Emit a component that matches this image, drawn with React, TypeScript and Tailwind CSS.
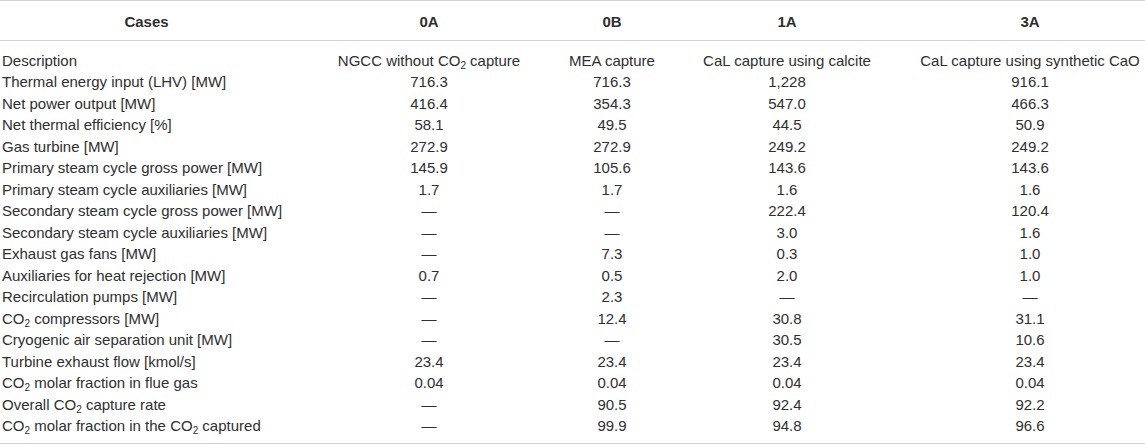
const CO2 = () => (
    <>
        CO<sub className="text-[10px] align-baseline relative top-[3px]">2</sub>
    </>
);

type Row = [React.ReactNode, string, string, string, string];

const rows: Row[] = [
    ["Thermal energy input (LHV) [MW]", "716.3", "716.3", "1,228", "916.1"],
    ["Net power output [MW]", "416.4", "354.3", "547.0", "466.3"],
    ["Net thermal efficiency [%]", "58.1", "49.5", "44.5", "50.9"],
    ["Gas turbine [MW]", "272.9", "272.9", "249.2", "249.2"],
    ["Primary steam cycle gross power [MW]", "145.9", "105.6", "143.6", "143.6"],
    ["Primary steam cycle auxiliaries [MW]", "1.7", "1.7", "1.6", "1.6"],
    ["Secondary steam cycle gross power [MW]", "—", "—", "222.4", "120.4"],
    ["Secondary steam cycle auxiliaries [MW]", "—", "—", "3.0", "1.6"],
    ["Exhaust gas fans [MW]", "—", "7.3", "0.3", "1.0"],
    ["Auxiliaries for heat rejection [MW]", "0.7", "0.5", "2.0", "1.0"],
    ["Recirculation pumps [MW]", "—", "2.3", "—", "—"],
    [<><CO2 /> compressors [MW]</>, "—", "12.4", "30.8", "31.1"],
    ["Cryogenic air separation unit [MW]", "—", "—", "30.5", "10.6"],
    ["Turbine exhaust flow [kmol/s]", "23.4", "23.4", "23.4", "23.4"],
    [<><CO2 /> molar fraction in flue gas</>, "0.04", "0.04", "0.04", "0.04"],
    [<>Overall <CO2 /> capture rate</>, "—", "90.5", "92.4", "92.2"],
    [<><CO2 /> molar fraction in the <CO2 /> captured</>, "—", "99.9", "94.8", "96.6"],
];

export default function App() {
    return (
        <div className="w-[1145px] h-[444px] bg-white text-[#2f2f2f]" style={{ fontFamily: "'Liberation Sans', Arial, sans-serif" }}>
            <div className="border-t border-b border-[#d2d2d2]">
                <table className="w-full table-fixed border-collapse text-[15px] leading-[21.5px]">
                    <colgroup>
                        <col className="w-[293px]" />
                        <col className="w-[272px]" />
                        <col className="w-[94px]" />
                        <col className="w-[256px]" />
                        <col className="w-[230px]" />
                    </colgroup>
                    <thead>
                        <tr className="h-[39px] border-b border-[#d2d2d2]">
                            <th className="font-bold pt-[2px]">Cases</th>
                            <th className="font-bold pt-[2px]">0A</th>
                            <th className="font-bold pt-[2px]">0B</th>
                            <th className="font-bold pt-[2px]">1A</th>
                            <th className="font-bold pt-[2px]">3A</th>
                        </tr>
                    </thead>
                    <tbody>
                        <tr>
                            <td className="pl-[2px] whitespace-nowrap pt-[9px]">Description</td>
                            <td className="text-center whitespace-nowrap pt-[9px]">NGCC without <CO2 /> capture</td>
                            <td className="text-center whitespace-nowrap pt-[9px]">MEA capture</td>
                            <td className="text-center whitespace-nowrap pt-[9px]">CaL capture using calcite</td>
                            <td className="text-center whitespace-nowrap pt-[9px]">CaL capture using synthetic CaO</td>
                        </tr>
                        {rows.map((r, i) => {
                            const pad = i === rows.length - 1 ? "pb-[6px]" : "";
                            return (
                                <tr key={i}>
                                    <td className={`pl-[2px] whitespace-nowrap ${pad}`}>{r[0]}</td>
                                    <td className={`text-center ${pad}`}>{r[1]}</td>
                                    <td className={`text-center ${pad}`}>{r[2]}</td>
                                    <td className={`text-center ${pad}`}>{r[3]}</td>
                                    <td className={`text-center ${pad}`}>{r[4]}</td>
                                </tr>
                            );
                        })}
                    </tbody>
                </table>
            </div>
        </div>
    );
}
